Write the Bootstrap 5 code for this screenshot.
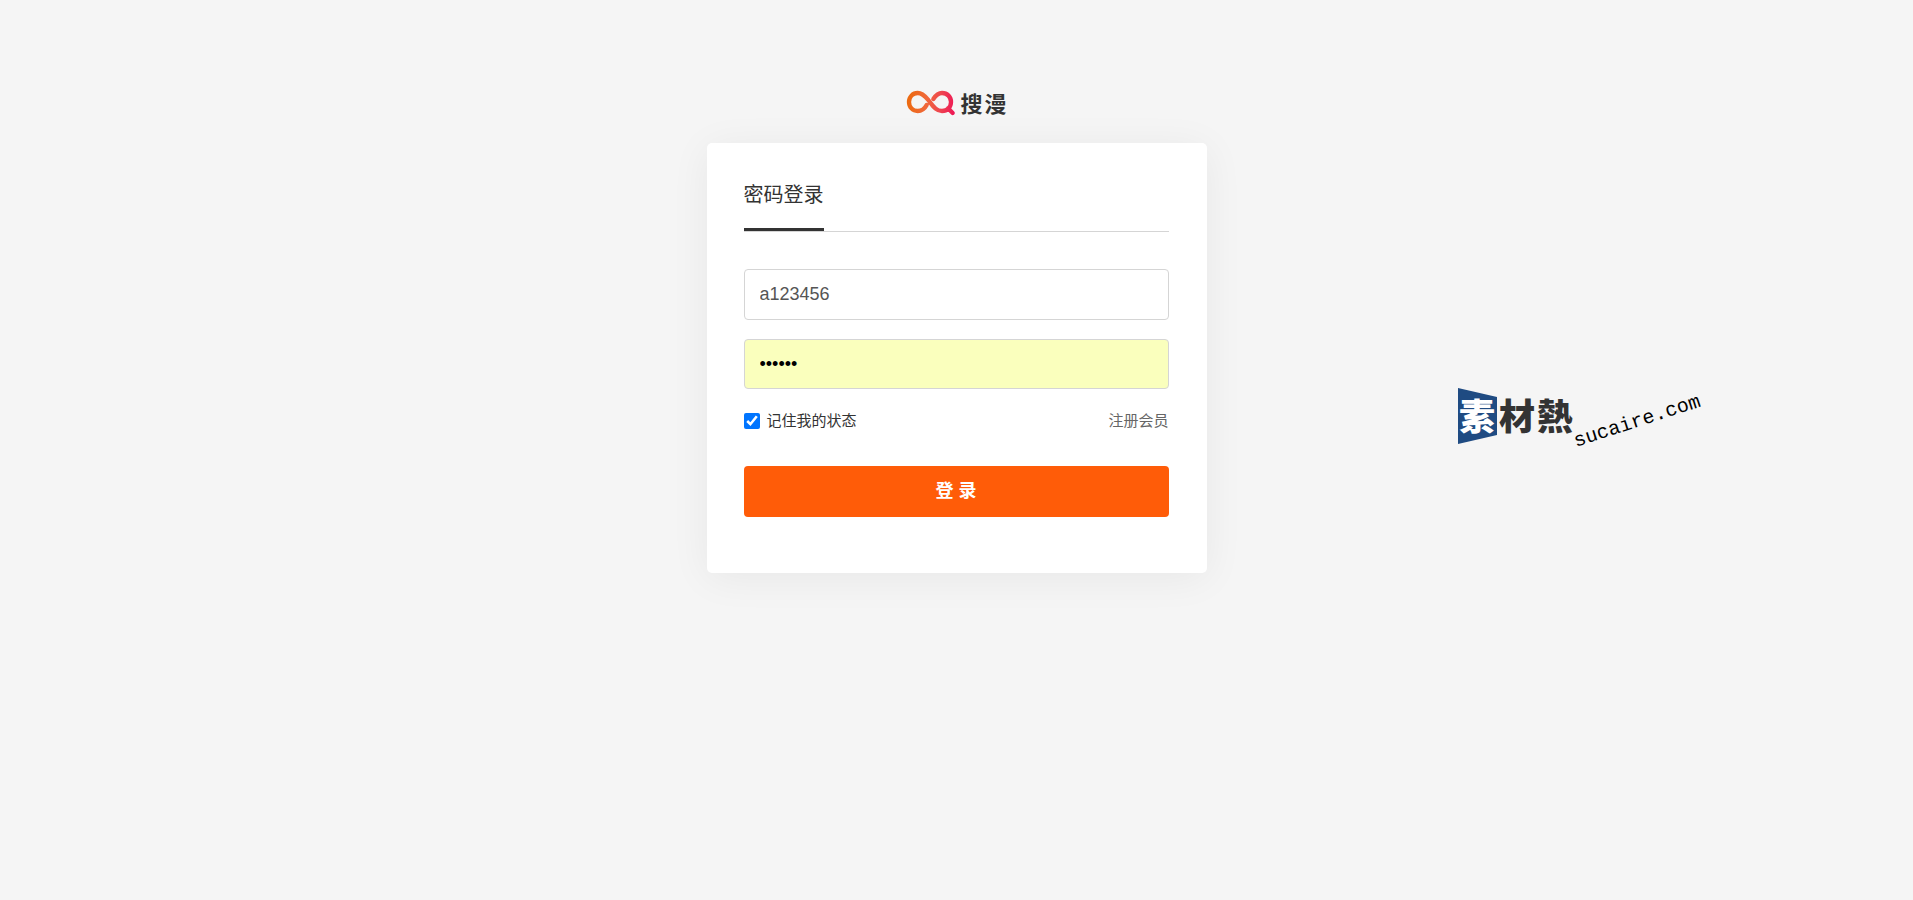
<!DOCTYPE html>
<html lang="zh-CN">
<head>
<meta charset="utf-8">
<meta name="viewport" content="width=device-width, initial-scale=1">
<title>搜漫 - 登录</title>
<link rel="stylesheet" href="https://cdn.jsdelivr.net/npm/bootstrap@5.3.0/dist/css/bootstrap.min.css">
<style>
  body { background: #f5f5f5; color: #333; font-family: "Liberation Sans", "Noto Sans CJK SC", sans-serif; }
  .login-wrap { max-width: 500px; padding-top: 88px; padding-bottom: 80px; }
  .brand { height: 31px; margin-bottom: 24px; color: #333; font-size: 22px; line-height: 31px; }
  .brand-name { gap: 2px; padding-top: 2px; }
  .login-card { padding: 31px 38px 56px 37px; border: 0; border-radius: 5px; box-shadow: 0 5px 40px rgba(0, 0, 0, .06); }
  .login-tabs { height: 58px; margin-bottom: 37px; border-bottom: 1px solid #d5d5d5; }
  .login-tabs .nav-link { height: 57px; padding: 0; border-bottom: 3px solid #333; color: #333; font-size: 20px; line-height: 42px; }
  .login-input { height: 51px; padding: 0 15px; border-color: #d5d5d5; border-radius: 4px; color: #555; font-size: 18px; }
  .login-input.saved { height: 50px; margin-top: 19px; background: #faffbd; color: #000; }
  .login-options { height: 24px; font-size: 15px; line-height: 24px; margin: 20px 0 33px; }
  .login-options input { width: 16px; height: 16px; accent-color: #0075ff; }
  .login-options label { padding-left: 7px; }
  .login-options a { color: #666; }
  .login-btn { height: 51px; padding: 0; border: 0; border-radius: 4px; background: #ff5c08; color: #fff; font-size: 18px; }
  .login-btn:hover { background: #e85205; color: #fff; }
  .site-mark { top: 382px; left: 76%; margin-left: 2px; }
</style>
</head>
<body>
<main class="container-fluid login-wrap px-0">
  <a class="brand d-flex justify-content-center align-items-center text-decoration-none fw-bold" href="#">
    <svg class="me-1" width="50" height="27" viewBox="50 45 150 81" aria-hidden="true">
      <defs>
        <linearGradient id="loop" gradientUnits="userSpaceOnUse" x1="55" y1="80" x2="195" y2="95">
          <stop offset="0" stop-color="#ec6a10"/><stop offset=".4" stop-color="#f0683a"/><stop offset=".7" stop-color="#ee4550"/><stop offset="1" stop-color="#ee1855"/>
        </linearGradient>
      </defs>
      <path d="M112 90C104 105 94 108 85 108C70 108 59 96 59 81C59 66 70 54 85 54C97 54 106 62 116 74C132 94 140 108 158 108C174 108 185 96 185 81C185 66 174 54 158 54C147 54 140 60 132 72M176 100L190 114" fill="none" stroke="url(#loop)" stroke-width="13" stroke-linecap="round" stroke-linejoin="round"/>
    </svg>
    <span class="brand-name d-flex"><span>搜</span><span>漫</span></span>
  </a>
  <section class="card login-card">
    <ul class="nav login-tabs">
      <li class="nav-item"><a class="nav-link" href="#" aria-current="page">密码登录</a></li>
    </ul>
    <form>
      <input class="form-control login-input" type="text" aria-label="用户名" value="a123456">
      <input class="form-control login-input saved" type="password" aria-label="密码" value="123456">
      <div class="login-options d-flex justify-content-between">
        <div class="d-flex align-items-center">
          <input type="checkbox" id="remember" checked>
          <label for="remember">记住我的状态</label>
        </div>
        <a class="text-decoration-none" href="#">注册会员</a>
      </div>
      <button class="btn login-btn w-100 fw-bold" type="button">登 录</button>
    </form>
  </section>
</main>
<svg class="site-mark position-absolute" width="250" height="72" viewBox="0 0 250 72">
  <path d="M2 6L41 15V53L2 62Z" fill="#1f4b82"/>
  <g font-family="Noto Sans CJK TC, sans-serif" font-weight="900" font-size="36">
    <text x="3" y="48" fill="#fff">素</text>
    <text x="43" y="48" fill="#333">材</text>
    <text x="81" y="48" fill="#333">熱</text>
  </g>
  <text transform="translate(120 65) rotate(-18)" font-family="Liberation Mono, monospace" font-size="20" fill="#000">sucaire.com</text>
</svg>
<script src="https://cdn.jsdelivr.net/npm/bootstrap@5.3.0/dist/js/bootstrap.bundle.min.js"></script>
</body>
</html>
